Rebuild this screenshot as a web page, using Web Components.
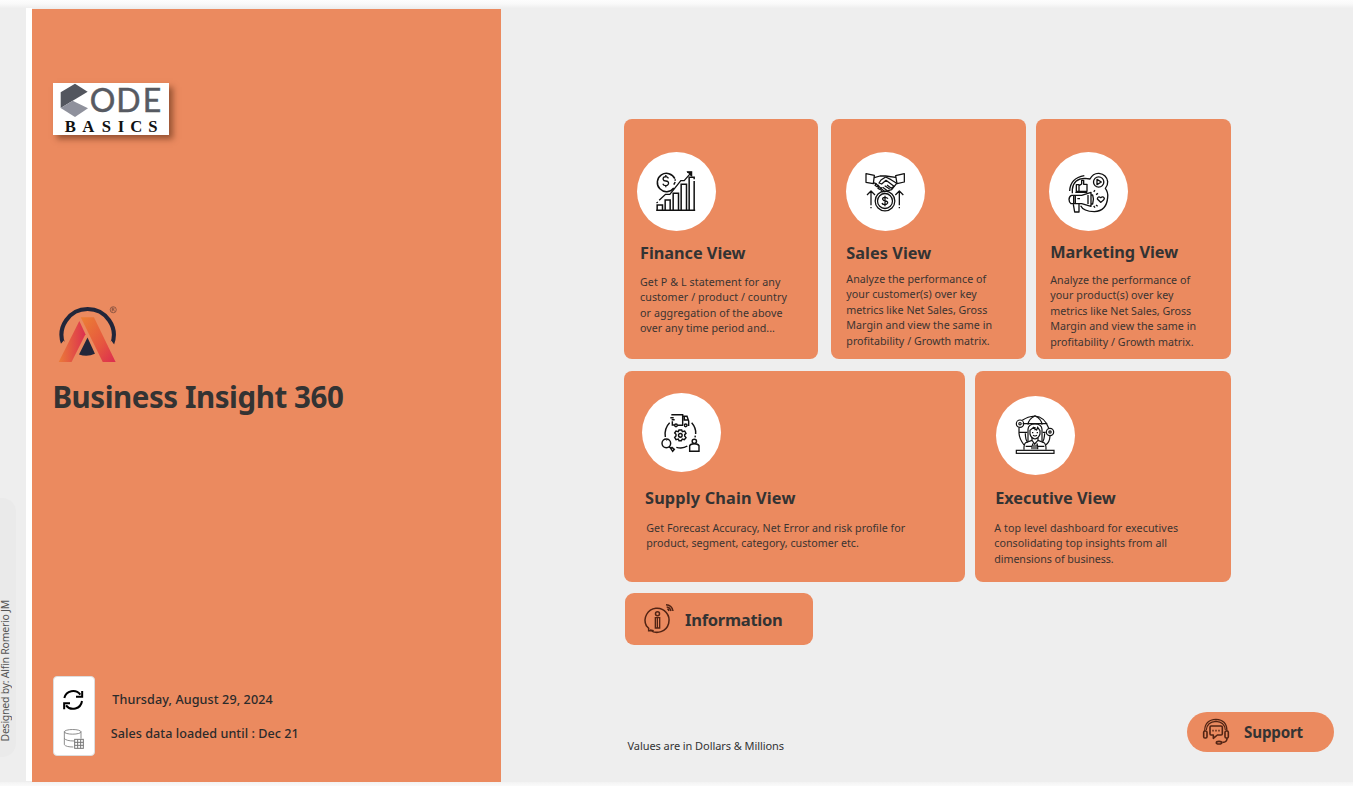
<!DOCTYPE html>
<html lang="en">
<head>
<meta charset="utf-8">
<title>Business Insight 360</title>
<style>
html,body{margin:0;padding:0}
body{width:1353px;height:786px;overflow:hidden;background:#eee;color:#333;font-family:"Noto Sans","Open Sans",sans-serif}
</style>
</head>
<body>
<bi-home></bi-home>

<template id="t-home">
<style>
:host{display:grid;grid-template:8px 774px 4px / 26px 6px 470px 1fr;width:1353px;height:786px;background:#eee}
.top{grid-column:1/-1;background:linear-gradient(#fdfdfd,#f9f9f9 50%,#efefef)}
.bottom{grid-column:1/-1;background:linear-gradient(#f3f3f3,#fafafa)}
.strip{background:#fff;height:773px}
author-tab{margin-top:490px}
</style>
<div class="top"></div>
<author-tab></author-tab>
<div class="strip"></div>
<brand-panel></brand-panel>
<view-area></view-area>
<div class="bottom"></div>
</template>

<template id="t-author">
<style>
:host{display:flex;align-items:flex-end;box-sizing:border-box;width:16px;height:259px;background:#eaeaea;border-radius:0 14px 14px 0;padding-bottom:15.5px}
text-fit{writing-mode:vertical-rl;transform:rotate(180deg);font-size:10.5px;line-height:14px;color:#555;margin-left:-2px}
</style>
<text-fit w="141.5" vertical>Designed by: Alfin Romerio JM</text-fit>
</template>

<template id="t-brand">
<style>
:host{display:flex;flex-direction:column;align-items:flex-start;box-sizing:border-box;width:469.4px;height:773px;margin-top:1px;background:#eb8a5f;padding:74px 0 0 21.4px}
.code{width:115.67px;height:52px;background:#fff;box-shadow:4px 4px 6px rgba(70,30,10,.5);display:block;overflow:visible}
.alfin{width:61px;height:61px;margin:168.600px 0 0 5px;display:block}
h1{margin:10px 0 0 -1px;font-size:29.5px;line-height:44px;font-weight:700;color:#333}
.status{display:flex;margin-top:257.400px;gap:15.400px}
.box{width:42px;height:80.5px;box-sizing:border-box;background:#fff;border:1px solid #ddd;border-radius:4px}
.box svg{display:block;width:40px;height:78.5px}
.rows{display:flex;flex-direction:column;gap:14px;padding-top:14.3px;font-size:12.6px;line-height:20px;font-weight:500;color:#2b2b2b}
.rows :first-child{margin-left:1.5px}
</style>
<svg class="code" viewBox="160 249 347 156">
 <path fill="#53565e" d="M183 277L226 251L264 275L183 324Z"/>
 <path fill="#8f919c" d="M183 324L219 302L265 325L226 351Z"/>
 <text y="336" x="270 350 429" font-family="Lato" font-size="96" fill="#575a62" stroke="#575a62" stroke-width="1.500">ODE</text>
 <text y="397" x="195 248 306 354 392 446" font-family="Liberation Serif" font-weight="bold" font-size="50" fill="#111">BASICS</text>
</svg>
<svg class="alfin" viewBox="55 30 180 180">
 <defs>
  <linearGradient id="a" x1="0" x2="1"><stop offset="0" stop-color="#eb7b38"/><stop offset="1" stop-color="#dc304f"/></linearGradient>
  <linearGradient id="b" x1="0" x2="1" y1="0" y2="1"><stop offset="0" stop-color="#ec8034"/><stop offset=".6" stop-color="#e6563f"/><stop offset="1" stop-color="#dc2c50"/></linearGradient>
 </defs>
 <path d="M70.500 149A77 77 0 1 1 214.500 149" fill="none" stroke="#22263a" stroke-width="12"/>
 <path fill="#eb8a5f" d="M60 152L72 138L84 152ZM202 152L212 138L224 154Z"/>
 <path fill="url(#a)" d="M57 201L118 80L136 119L95 201Z"/>
 <path fill="url(#b)" d="M122 69H161L225 201H187Z"/>
 <path fill="#22263a" d="M142 129L164 177Q141 188 117 179Z"/>
 <circle cx="218" cy="47" r="9" fill="none" stroke="#6b4339" stroke-width="2"/>
 <path d="M215 52V42H219Q222 44 219 47H215M219 47L222 52" fill="none" stroke="#6b4339" stroke-width="2"/>
</svg>
<h1><text-fit w="291">Business Insight 360</text-fit></h1>
<div class="status">
 <div class="box"><svg viewBox="42 36 120 235.500" fill="none">
  <g stroke="#000" stroke-width="6">
   <path d="M73 99A27 27 0 0 1 121 89M126 108A27 27 0 0 1 78 121"/>
   <path d="M108 95.500H126.500V78M90 114.500H72.500V133"/>
  </g>
  <g stroke="#777" stroke-width="2.500">
   <ellipse cx="98" cy="200.500" rx="25" ry="7"/><path d="M73 200V239Q78 246 100 246M123 200V221M73 220Q78 228 103 228"/>
   <rect x="104" y="223" width="26" height="27" stroke-width="3"/><path d="M104 232H130M104 241H130M113 223V250M122 223V250" stroke-width="3"/>
  </g></svg></div>
 <div class="rows">
  <text-fit w="160.500">Thursday, August 29, 2024</text-fit>
  <text-fit w="188">Sales data loaded until : Dec 21</text-fit>
 </div>
</div>
</template>

<template id="t-area">
<style>
:host{display:block;padding:111.400px 0 0 122px;box-sizing:border-box;height:774px}
.row{display:flex}
.r1{height:239.600px}
.r2{height:211.400px;margin-top:12px}
.info{margin-top:10.600px;margin-left:1px}
.foot{display:flex;align-items:flex-start;justify-content:space-between;margin:67px 19.300px 0 3.500px}
.values{font-size:11px;line-height:16px;margin-top:26px;color:#333}
</style>
<div class="row r1">
 <info-card style="--w:194.400px;--pt:32.600px;--pl:12.600px;--tt:10.300px;--tl:16px;--bt:9.700px;--bl:16px">
  <svg slot="icon" viewBox="65.500 125 237 237"><g fill="none" stroke="#111" stroke-width="4.500">
   <path d="M176 233A27.500 27.500 0 1 1 179 205M180 207V211M180 215L176 223"/>
   <path d="M152 194V199M152 226V231M160 204Q157 199 151 199Q143 200 144 207Q145 212 152 212Q161 213 160 220Q158 226 152 226Q145 226 143 220" stroke-width="4"/>
   <path d="M123 300H240M126 299V284H142V299M150 299V269H165V299M174 299V249H190V299M198 299V222H214V299M222 299V201H237V207M237 212V299"/>
   <path d="M124 278L128 275M132 270L151 252H164L197 211H207L228 187M216 186H228V197" stroke-width="4"/>
   <path d="M219 185H229V195Z" fill="#111"/></g></svg>
  <text-fit slot="title" w="105.500">Finance View</text-fit>
  <text-fit w="140.500">Get P &amp; L statement for any</text-fit>
  <text-fit w="147">customer / product / country</text-fit>
  <text-fit w="142.500">or aggregation of the above</text-fit>
  <text-fit w="135">over any time period and...</text-fit>
 </info-card>
 <info-card style="--w:194.500px;--ml:12.900px;--pt:32.600px;--pl:15.200px;--tt:10.300px;--tl:15px;--bt:6.700px;--bl:15px">
  <svg slot="icon" viewBox="64 125 237 237"><g fill="none" stroke="#111" stroke-width="3.800" stroke-linejoin="round">
   <path d="M124 190L149 195L146 220L124 216ZM239 190L213 196L217 220L239 215ZM149 202L166 197H183L213 201M146 217L154 220L180 244L201 238L216 219"/>
   <path d="M183 200L169 209L163 218L171 221L184 210L208 228L200 234L187 224M195 236L180 226M188 241L174 231M155 219L151 225L157 229L163 224M162 228L160 234L166 237L172 231M169 238L171 244L179 244M183 200L199 208L216 219"/>
   <circle cx="181" cy="272" r="29.500"/><circle cx="181" cy="272" r="22.500"/>
   <path d="M181 256V288M190 265Q187 261 180 261Q173 262 174 267Q176 272 182 272Q190 273 189 278Q186 284 179 283Q173 282 172 278"/>
   <path d="M127 254L139 242L151 254M139 243V285M139 290V294M212 254L224 242L236 254M224 243V285M224 290V294"/>
  </g></svg>
  <text-fit slot="title" w="85">Sales View</text-fit>
  <text-fit w="140">Analyze the performance of</text-fit>
  <text-fit w="130.500">your customer(s) over key</text-fit>
  <text-fit w="141">metrics like Net Sales, Gross</text-fit>
  <text-fit w="146">Margin and view the same in</text-fit>
  <text-fit w="143.500">profitability / Growth matrix.</text-fit>
 </info-card>
 <info-card style="--w:194.800px;--ml:10.400px;--pt:32.600px;--pl:12.800px;--tt:9.300px;--tl:14px;--bt:8.300px;--bl:14px">
  <svg slot="icon" viewBox="57 125 237 237"><g fill="none" stroke="#111" stroke-width="4" stroke-linejoin="round">
   <path d="M119 242Q121 203 163 196M127 237Q130 205 165 204L180 206Q189 188 207 189Q230 192 233 214Q234 225 226 234Q235 246 233 261Q230 302 193 304Q160 303 152 286M127 237V249"/>
   <circle cx="206" cy="215" r="15.500"/><path d="M201 207L214 215L201 223Z"/>
   <path d="M139 223H147V243H139ZM147 226L155 221V210H161V222H171V243H147M136 246H172"/>
   <path d="M131 255H155L183 246V288L155 280H131M131 255V280H123Q117 276 117 267Q118 257 125 255H131M183 254H188Q193 267 188 281H183M136 256V280M142 265H150M130 282L134 305H147V282M174 254V281"/>
   <path d="M212 276L202 266Q204 256 212 262Q219 256 223 264Q223 269 212 276ZM191 244L195 240M198 253L204 249M191 287L195 292M198 284L203 288"/>
  </g></svg>
  <text-fit slot="title" w="128">Marketing View</text-fit>
  <text-fit w="140">Analyze the performance of</text-fit>
  <text-fit w="123.500">your product(s) over key</text-fit>
  <text-fit w="141">metrics like Net Sales, Gross</text-fit>
  <text-fit w="146">Margin and view the same in</text-fit>
  <text-fit w="143.500">profitability / Growth matrix.</text-fit>
 </info-card>
</div>
<div class="row r2">
 <info-card style="--w:341.300px;--pt:22px;--pl:17.500px;--tt:14.300px;--tl:21px;--bt:10.700px;--bl:22.300px">
  <svg slot="icon" viewBox="80 84 237 237"><g fill="none" stroke="#111" stroke-width="4.300">
   <path d="M163 173Q146 190 150 216M154 224L155 226M229 173Q243 189 241 207M240 212L239 217M183 247Q203 252 216 243"/>
   <path d="M168 149H202V181M165 158H175M169 164H178M171 169V180H178M187 181H203M217 181H220V168L215 154H202M207 155V165H220"/><circle cx="182" cy="181" r="4"/><circle cx="211" cy="181" r="4"/>
   <circle cx="195" cy="211" r="5.500"/><path d="M191 195H199L201 200L208 198L212 205L208 209V213L212 218L207 224L201 222L198 227H191L189 222L182 224L178 217L182 213V208L178 204L182 198L189 200Z"/>
   <circle cx="153" cy="235" r="13"/><path d="M161 245L168 251M166 250L172 259L177 253L170 247Z"/>
   <circle cx="237" cy="229" r="6.500"/><path d="M223 259V242Q226 236 237 236Q248 236 251 242V259Z"/>
  </g></svg>
  <text-fit slot="title" w="150.500">Supply Chain View</text-fit>
  <text-fit w="259">Get Forecast Accuracy, Net Error and risk profile for</text-fit>
  <text-fit w="212.500">product, segment, category, customer etc.</text-fit>
 </info-card>
 <info-card style="--w:255.800px;--ml:9.900px;--pt:24.700px;--pl:21.200px;--tt:11.600px;--tl:20px;--bt:10.700px;--bl:19px">
  <svg slot="icon" viewBox="79 93 237 237"><g fill="none" stroke="#111" stroke-width="3.600">
   <path d="M158 166Q174 154 196 153Q224 155 237 189M148 189V205Q149 222 163 240M159 176H233M149 202H173M219 202H228M196 153Q176 162 175 179M196 153Q216 162 217 179M241 213Q240 232 229 239M167 205Q167 225 174 232M225 205Q224 225 218 232"/>
   <circle cx="151" cy="176" r="11"/><circle cx="151" cy="176" r="3.500"/><circle cx="241" cy="201" r="11"/><circle cx="241" cy="201" r="3.500"/>
   <path d="M175 229V193Q176 177 196 177Q216 177 217 193V229M181 207V196L192 187L201 195L204 187L211 197V207Q207 220 196 222Q184 220 181 207ZM196 186V196M187 203H191M201 203H205M190 211Q196 215 202 211"/>
   <path d="M187 219V226L195 237L205 226V219M187 226L168 233Q162 239 163 254M205 226L223 233Q230 239 229 254M168 244H187V253M224 244H204V253M187 244L190 235M204 244L202 235M193 239V253M199 239V253"/>
   <rect x="140" y="256" width="113" height="9"/>
  </g></svg>
  <text-fit slot="title" w="120.500">Executive View</text-fit>
  <text-fit w="184">A top level dashboard for executives</text-fit>
  <text-fit w="173">consolidating top insights from all</text-fit>
  <text-fit w="119.500">dimensions of business.</text-fit>
 </info-card>
</div>
<pill-button class="info" style="--w:188px;--h:52px;--r:9px;--pl:17px;--iw:34px;--ih:34px;--gap:9px;--fs:16.500px;--shift:1.500px">
 <svg slot="icon" viewBox="81 53 102 102"><g fill="none" stroke="#522414" stroke-width="4.500">
  <path d="M105 137A36 36 0 1 0 94 124L92 123M94 124L101 132V139H116L105 137"/>
  <circle cx="127.500" cy="88" r="6"/><path d="M121 100H134V131H121ZM127 101V130" stroke-width="4"/>
  <path d="M153 61Q171 62 174 80M155 68Q165 69 168 80M157 74Q161 75 162 80"/></g></svg>
 <text-fit w="97.500">Information</text-fit>
</pill-button>
<div class="foot">
 <text-fit class="values" w="156.500">Values are in Dollars &amp; Millions</text-fit>
 <pill-button style="--w:147.200px;--h:40px;--r:20px;--pl:13.500px;--iw:32px;--ih:32px;--gap:12px;--fs:15.200px;--shift:0px">
  <svg slot="icon" viewBox="76 48 96 96"><g fill="none" stroke="#522414" stroke-width="4.800" stroke-linejoin="round">
   <path d="M90 93Q90 59 124 58Q157 59 157 93M95 90Q97 65 124 64Q150 65 152 90" stroke-width="3.500"/>
   <rect x="87" y="93" width="10" height="21" rx="4"/><rect x="151" y="93" width="10" height="21" rx="4"/>
   <path d="M109 78H139Q143 78 143 82V101Q143 105 139 105H128L116 115V105H109Q106 105 106 101V82Q106 78 109 78ZM113 92H117M122 92H126M131 92H135"/>
   <path d="M157 114Q158 127 143 127M139 127"/><ellipse cx="133" cy="128" rx="8" ry="4"/></g></svg>
  <text-fit w="59">Support</text-fit>
 </pill-button>
</div>
</template>

<template id="t-card">
<style>
:host{display:block;flex:none;box-sizing:border-box;width:var(--w);margin-left:var(--ml,0);height:100%;background:#eb8a5f;border-radius:8px;padding-top:var(--pt)}
.disc{width:79px;height:79px;border-radius:50%;background:#fff;margin-left:var(--pl)}
::slotted(svg){display:block;width:79px;height:79px}
h2{margin:var(--tt) 0 0 var(--tl);font-size:16.3px;line-height:24px;font-weight:700;color:#333}
.body{display:flex;flex-direction:column;align-items:flex-start;margin:var(--bt) 0 0 var(--bl);font-size:10.7px;line-height:15.5px;color:#3b3431;font-weight:380}
</style>
<div class="disc"><slot name="icon"></slot></div>
<h2><slot name="title"></slot></h2>
<div class="body"><slot></slot></div>
</template>

<template id="t-pill">
<style>
:host{display:flex;align-items:center;box-sizing:border-box;width:var(--w);height:var(--h);border-radius:var(--r);background:#eb8a5f;padding-left:var(--pl);gap:var(--gap);font-size:var(--fs);line-height:24px;font-weight:700;color:#333}
::slotted(svg){display:block;flex:none;width:var(--iw);height:var(--ih)}
::slotted(text-fit){padding-top:var(--shift)}
</style>
<slot name="icon"></slot><slot></slot>
</template>

<script>
const define=(name,id)=>customElements.define(name,class extends HTMLElement{
  constructor(){super();this.attachShadow({mode:"open"}).append(document.getElementById(id).content.cloneNode(true));}
});
define("info-card","t-card");
define("pill-button","t-pill");
define("author-tab","t-author");
define("brand-panel","t-brand");
define("view-area","t-area");
define("bi-home","t-home");

// One line of text, tracked so that it fills the width given in "w".
customElements.define("text-fit",class extends HTMLElement{
  constructor(){
    super();
    this.attachShadow({mode:"open"}).innerHTML="<style>:host{display:block;width:max-content;white-space:nowrap}span{display:inline-block}</style><span><slot></slot></span>";
  }
  connectedCallback(){
    const s=this.shadowRoot.querySelector("span"),r=s.getBoundingClientRect();
    const size=this.hasAttribute("vertical")?r.height:r.width;
    if(size)s.style.letterSpacing=(+this.getAttribute("w")-size)/this.textContent.length+"px";
  }
});
</script>
</body>
</html>
